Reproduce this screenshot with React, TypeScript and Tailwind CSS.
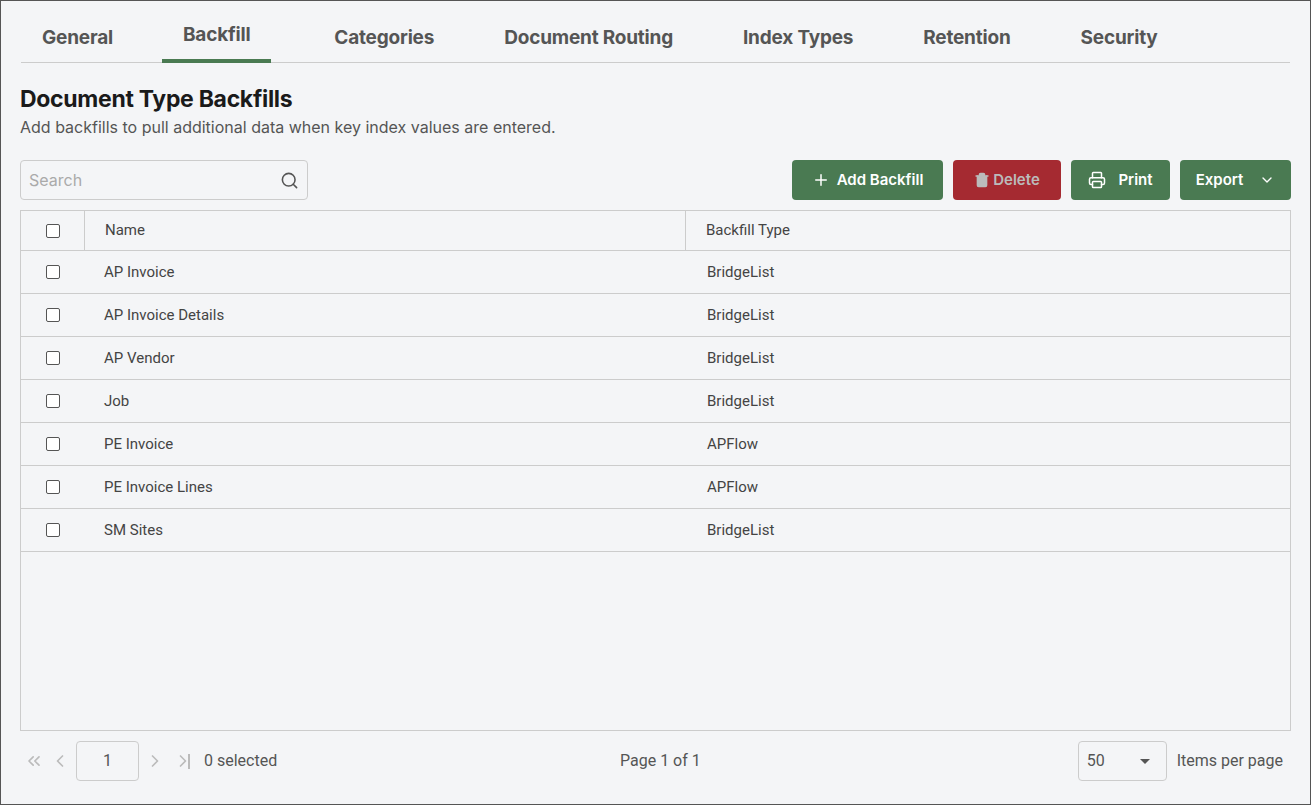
import React from 'react';
import { Search, Plus, Trash2, Printer, ChevronDown, ChevronLeft, ChevronRight, ChevronsLeft } from 'lucide-react';

const tabs = ['General', 'Backfill', 'Categories', 'Document Routing', 'Index Types', 'Retention', 'Security'];

const rows = [
  { name: 'AP Invoice', type: 'BridgeList' },
  { name: 'AP Invoice Details', type: 'BridgeList' },
  { name: 'AP Vendor', type: 'BridgeList' },
  { name: 'Job', type: 'BridgeList' },
  { name: 'PE Invoice', type: 'APFlow' },
  { name: 'PE Invoice Lines', type: 'APFlow' },
  { name: 'SM Sites', type: 'BridgeList' },
];

const Check = () => (
  <span className="inline-block w-[14px] h-[14px] border border-[#555] rounded-[2px] bg-white" />
);

export default function App() {
  return (
    <div
      className="w-[1311px] h-[805px] bg-[#f4f5f7] border border-[#555] flex flex-col px-[19px] text-[#333]"
      style={{ fontFamily: 'Inter, "Liberation Sans", sans-serif' }}
    >
      <div className="flex items-end h-[62px] border-b border-[#ccc] mx-px">
        {tabs.map((t, i) => (
          <div
            key={t}
            className={`px-[21px] text-[19px] font-bold tracking-[-0.2px] text-[#555] ${
              i === 1 ? 'pb-[10px] border-b-4 border-[#4a7a52] mb-[-1px] ml-[28px] mr-[28px]' : 'pb-[10px]'
            } ${i === 0 ? 'ml-0' : ''} ${i > 1 ? 'mx-[14px]' : ''}`}
          >
            {t}
          </div>
        ))}
      </div>

      <h1 className="mt-[22px] text-[23px] font-bold text-[#1a1a1a] leading-[28px] tracking-[-0.3px]">Document Type Backfills</h1>
      <p className="mt-[4px] text-[16px] text-[#555] leading-5">Add backfills to pull additional data when key index values are entered.</p>

      <div className="mt-[23px] flex items-center justify-between">
        <div className="w-[288px] h-[40px] border border-[#ccc] rounded-[4px] flex items-center justify-between px-[8px] bg-[#f4f5f7]">
          <span className="text-[16px] text-[#aaa]">Search</span>
          <Search size={19} className="text-[#555]" />
        </div>
        <div className="flex gap-[10px] text-white text-[15px] font-semibold">
          <button className="h-[40px] w-[151px] rounded-[4px] bg-[#4a7a52] flex items-center justify-center gap-[7px]">
            <Plus size={18} strokeWidth={2} /> Add Backfill
          </button>
          <button className="h-[40px] w-[108px] rounded-[4px] bg-[#a52a31] flex items-center justify-center gap-[3px] text-[#bbb]">
            <Trash2 size={16} className="fill-[#bbb]" /> Delete
          </button>
          <button className="h-[40px] w-[99px] rounded-[4px] bg-[#4a7a52] flex items-center justify-center gap-[12px]">
            <Printer size={18} /> Print
          </button>
          <button className="h-[40px] w-[111px] rounded-[4px] bg-[#4a7a52] flex items-center justify-center gap-[16px]">
            Export <ChevronDown size={16} />
          </button>
        </div>
      </div>

      <div className="mt-[10px] h-[521px] border border-[#ccc] flex flex-col text-[15px] text-[#444]" style={{ fontFamily: 'Roboto, "Liberation Sans", sans-serif' }}>
        <div className="flex h-[40px] border-b border-[#ccc] items-center">
          <div className="w-[63px] flex justify-center"><Check /></div>
          <div className="w-[602px] h-full flex items-center px-[20px] border-l border-r border-[#ccc]">Name</div>
          <div className="flex-1 px-[20px]">Backfill Type</div>
        </div>
        {rows.map((r) => (
          <div key={r.name} className="flex h-[43px] border-b border-[#ccc] items-center">
            <div className="w-[63px] flex justify-center"><Check /></div>
            <div className="w-[602px] px-[20px]">{r.name}</div>
            <div className="flex-1 px-[21px]">{r.type}</div>
          </div>
        ))}
      </div>

      <div className="flex items-center h-[60px] text-[16px] text-[#555]" style={{ fontFamily: 'Roboto, "Liberation Sans", sans-serif' }}>
        <div className="flex items-center w-[600px]">
          <ChevronsLeft size={20} className="text-[#bbb] ml-[4px]" />
          <ChevronLeft size={20} className="text-[#bbb] ml-[6px]" />
          <div className="ml-[6px] w-[63px] h-[40px] border border-[#ccc] rounded-[4px] flex items-center justify-center">1</div>
          <ChevronRight size={20} className="text-[#bbb] ml-[6px]" />
          <span className="ml-[8px] text-[#bbb] flex items-center"><ChevronRight size={20} /><span className="w-[2px] h-[15px] bg-[#bbb] -ml-[5px]" /></span>
          <span className="ml-[14px]">0 selected</span>
        </div>
        <div className="w-[450px] pl-[-3px] text-[#555]">Page 1 of 1</div>
        <div className="flex-1 flex items-center justify-end gap-[10px] pr-[8px]">
          <div className="w-[89px] h-[40px] border border-[#ccc] rounded-[4px] flex items-center justify-between px-[8px]">
            <span>50</span>
            <span className="w-0 h-0 border-l-[5px] border-r-[5px] border-t-[5px] border-l-transparent border-r-transparent border-t-[#555] mr-[8px]" />
          </div>
          <span>Items per page</span>
        </div>
      </div>
    </div>
  );
}
